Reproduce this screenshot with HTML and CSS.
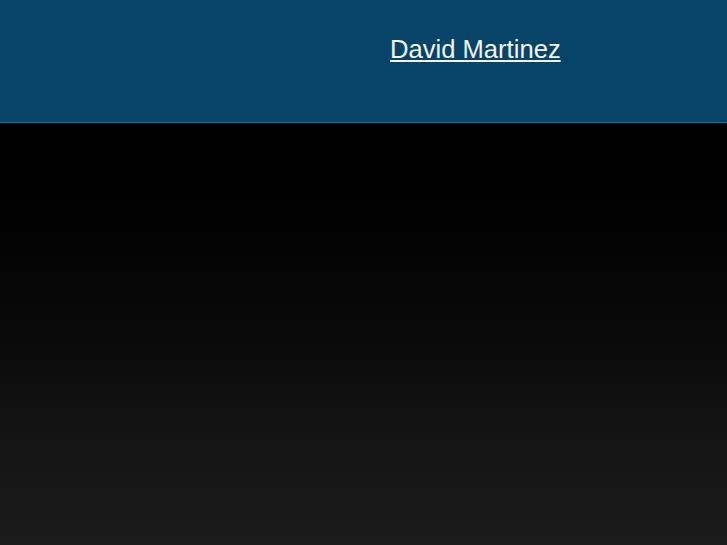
FILE: index.html
```html
<!DOCTYPE html>
<html>
<head>
<meta charset="utf-8">
<link rel="stylesheet" href="styles.css">
</head>
<body>
<header class="top">
  <a class="name" href="#">David Martinez</a>
</header>
<main class="body"></main>
</body>
</html>
```

FILE: styles.css
```css
html, body {
  margin: 0;
  padding: 0;
  height: 100%;
}
body {
  display: flex;
  flex-direction: column;
  font-family: "Liberation Sans", Arial, sans-serif;
  background: #1b1b1b;
}
.top {
  height: 122px;
  background: #084467;
  border-bottom: 1px solid #2a6686;
  box-sizing: content-box;
  padding: 0 0 0 390px;
  display: flex;
  align-items: flex-start;
}
.name {
  margin-top: 34px;
  font-size: 25.6px;
  color: #f2f4f6;
  text-decoration: underline;
  line-height: 30px;
}
.body {
  flex: 1;
  background: linear-gradient(to bottom, #000 0px, #020202 100px, #0b0b0b 230px, #151515 320px, #1b1b1b 422px);
}
```
